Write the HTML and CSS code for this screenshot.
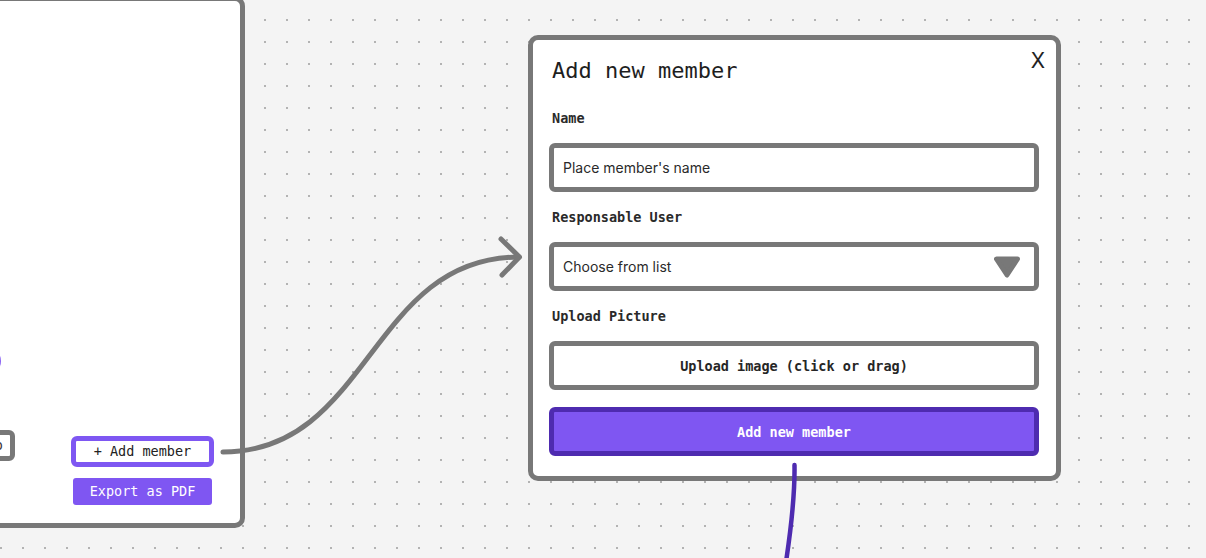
FILE: index.html
```html
<!DOCTYPE html>
<html lang="en">
<head>
<meta charset="utf-8">
<title>Add new member</title>
<link rel="stylesheet" href="styles.css">
</head>
<body>
<main class="board">
  <section class="panel">
    <div class="panel-spacer"></div>
    <div class="legend-row"><span class="legend-pill"></span></div>
    <div class="panel-footer">
      <button class="ghost-btn" type="button">Undo</button>
      <div class="panel-actions">
        <button class="outline-btn" type="button">+ Add member</button>
        <button class="solid-btn" type="button">Export as PDF</button>
      </div>
    </div>
  </section>

  <section class="modal">
    <h1 class="modal-title">Add new member</h1>
    <button class="modal-close" type="button">X</button>

    <div class="field-label">Name</div>
    <div class="field"><span class="placeholder">Place member's name</span></div>

    <div class="field-label">Responsable User</div>
    <div class="field field-select">
      <span class="placeholder">Choose from list</span>
      <svg class="caret" width="26" height="22" viewBox="0 0 26 22" aria-hidden="true">
        <polygon points="2.5,3 23.5,3 13,19" fill="#787878" stroke="#787878" stroke-width="5" stroke-linejoin="round"/>
      </svg>
    </div>

    <div class="field-label">Upload Picture</div>
    <div class="field field-upload"><span class="upload-text">Upload image (click or drag)</span></div>

    <button class="submit-btn" type="button">Add new member</button>
  </section>

  <svg class="wires" width="1206" height="558" viewBox="0 0 1206 558" aria-hidden="true">
    <path d="M223 452 C 370 452, 370 257, 519 257" fill="none" stroke="#787878" stroke-width="5" stroke-linecap="round"/>
    <path d="M501 239 L 519.5 257 L 502 275" fill="none" stroke="#787878" stroke-width="5" stroke-linecap="round" stroke-linejoin="round"/>
    <path d="M794.5 465 C 795 495, 792 522, 786 562" fill="none" stroke="#4e2bb0" stroke-width="4.5" stroke-linecap="round"/>
  </svg>
</main>
</body>
</html>
```

FILE: styles.css
```css
* {
  box-sizing: border-box;
}

html,
body {
  margin: 0;
  padding: 0;
  background: #f4f4f4;
}

.board {
  position: relative;
  width: 1206px;
  height: 558px;
  overflow: hidden;
  background-color: #f4f4f4;
  background-image: radial-gradient(circle at center, #b3b3b3 0, #b3b3b3 1px, rgba(179, 179, 179, 0) 1.5px);
  background-size: 22px 22px;
  background-position: -10px 9px;
  font-family: "DejaVu Sans Mono", "Liberation Mono", monospace;
  color: #222;
}

button {
  font: inherit;
  margin: 0;
  cursor: pointer;
}

/* ---------- left board panel ---------- */
.panel {
  position: absolute;
  left: -300px;
  top: -4px;
  width: 545px;
  height: 532px;
  background: #fff;
  border: 5px solid #787878;
  border-radius: 10px;
  display: flex;
  flex-direction: column;
  padding: 0 26px 18px 0;
}

.panel-spacer {
  flex: 1;
}

.legend-row {
  display: flex;
  justify-content: flex-end;
  margin-bottom: 61px;
}

.legend-pill {
  width: 30px;
  height: 28px;
  border-radius: 14px;
  background: #8a63f3;
  margin-right: 213px;
}

.panel-footer {
  display: flex;
  justify-content: flex-end;
  align-items: flex-start;
  gap: 56px;
}

.ghost-btn {
  margin-top: -6px;
  height: 31px;
  border: 5px solid #787878;
  border-radius: 6px;
  background: #fff;
  padding: 0 7px 0 8px;
  font-size: 13.5px;
  line-height: 21px;
  color: #333;
}

.panel-actions {
  display: flex;
  flex-direction: column;
  align-items: center;
  gap: 11px;
}

.outline-btn {
  width: 143px;
  height: 31px;
  border: 5px solid #7e57f2;
  border-radius: 6px;
  background: #fff;
  padding: 0;
  font-size: 13.5px;
  line-height: 21px;
  color: #222;
}

.solid-btn {
  width: 139px;
  height: 27px;
  border: 0;
  border-radius: 3px;
  background: #7f56f2;
  padding: 0;
  font-size: 13.5px;
  line-height: 27px;
  color: #fff;
}

/* ---------- modal ---------- */
.modal {
  position: absolute;
  left: 528px;
  top: 35px;
  width: 533px;
  background: #fff;
  border: 5px solid #787878;
  border-radius: 10px;
  padding: 17px 17px 20px 16px;
  display: flex;
  flex-direction: column;
  gap: 17px;
}

.modal-title {
  margin: 1px 0 9px;
  padding-left: 3px;
  font-size: 22px;
  line-height: 26px;
  font-weight: normal;
  color: #1e1e1e;
}

.modal-close {
  position: absolute;
  top: 10px;
  right: 11px;
  border: 0;
  background: none;
  padding: 0;
  font-family: Inter, "Noto Sans", sans-serif;
  font-size: 21px;
  line-height: 21px;
  font-weight: 400;
  color: #222;
}

.field-label {
  padding-left: 3px;
  font-size: 13.5px;
  line-height: 16px;
  font-weight: 600;
  color: #2a2a2a;
}

.field {
  height: 49px;
  border: 5px solid #787878;
  border-radius: 6px;
  background: #fff;
  display: flex;
  align-items: center;
  padding: 0 14px 0 9px;
}

.placeholder {
  font-family: Inter, "Noto Sans", sans-serif;
  font-size: 14px;
  color: #2a2a2a;
}

.field-select {
  justify-content: space-between;
}

.caret {
  display: block;
}

.field-upload {
  justify-content: center;
  padding: 0;
}

.upload-text {
  font-size: 13.5px;
  font-weight: bold;
  color: #262626;
}

.submit-btn {
  height: 49px;
  border: 5px solid #4e2bb0;
  border-radius: 6px;
  background: #7f56f2;
  padding: 0;
  font-size: 13.5px;
  font-weight: bold;
  color: #fff;
}

/* ---------- connectors ---------- */
.wires {
  position: absolute;
  left: 0;
  top: 0;
  pointer-events: none;
}
```
